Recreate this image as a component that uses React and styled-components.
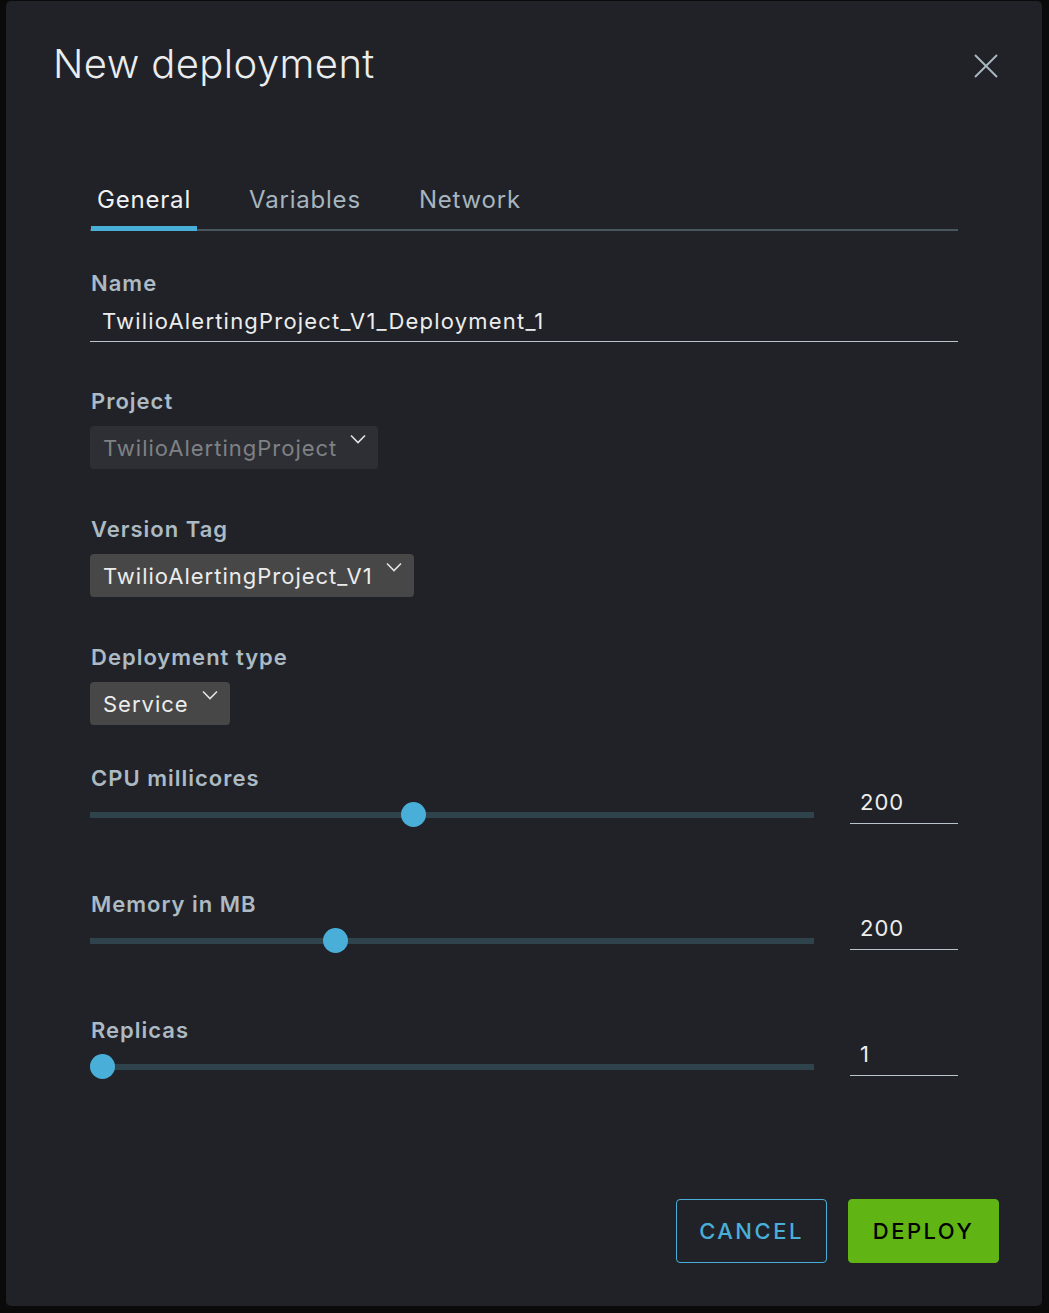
import React from 'react';
import styled, { createGlobalStyle } from 'styled-components';

const GlobalStyle = createGlobalStyle`
  html, body {
    margin: 0;
    padding: 0;
    background: #0a0a0a;
  }
  body {
    font-family: Inter, 'Noto Sans', sans-serif;
  }
`;

const Modal = styled.div`
  box-sizing: border-box;
  width: 1036px;
  height: 1305px;
  margin: 1px 0 0 6px;
  background: #212228;
  border-radius: 5px;
  display: flex;
  flex-direction: column;
`;

const Header = styled.div`
  display: flex;
  justify-content: space-between;
  align-items: flex-start;
  padding: 39px 44px 0 47px;
`;

const Title = styled.h1`
  margin: 0;
  font-size: 40px;
  line-height: 48px;
  font-weight: 300;
  letter-spacing: 0.4px;
  color: #eaecee;
`;

const CloseButton = styled.button`
  border: none;
  background: none;
  padding: 0;
  margin-top: 14px;
  width: 24px;
  height: 24px;
  cursor: pointer;
  display: flex;
`;

const Body = styled.div`
  padding: 0 84px;
  display: flex;
  flex-direction: column;
`;

const TabList = styled.div`
  margin-top: 97px;
  display: flex;
  gap: 46px;
  border-bottom: 2px solid #485660;
  padding-left: 1px;
`;

const Tab = styled.div`
  padding: 0 6px 11px;
  margin-bottom: -2px;
  font-size: 24px;
  line-height: 30px;
  letter-spacing: 0.8px;
  color: ${p => (p.$active ? '#f0f2f3' : '#a6b5be')};
  border-bottom: 5px solid ${p => (p.$active ? '#49afd9' : 'transparent')};
`;

const Field = styled.div`
  margin-top: ${p => p.$top}px;
  display: flex;
  flex-direction: column;
  align-items: flex-start;
`;

const Label = styled.label`
  font-size: 22px;
  line-height: 26px;
  font-weight: 600;
  letter-spacing: 1px;
  color: #acbac3;
  margin-bottom: 12px;
  padding-left: 1px;
`;

const TextInput = styled.div`
  align-self: stretch;
  padding: 0 12px 7px;
  font-size: 22px;
  line-height: 26px;
  letter-spacing: 1.2px;
  color: #eceded;
  border-bottom: 1px solid #b9c5cc;
`;

const Select = styled.div`
  box-sizing: border-box;
  height: 43px;
  display: inline-flex;
  gap: 13px;
  padding: 2px 12px 0 13px;
  border-radius: 4px;
  background: ${p => (p.$disabled ? '#2e2f35' : '#474747')};
  color: ${p => (p.$disabled ? '#7f8184' : '#ececec')};
  font-size: 22px;
  line-height: 40px;
  letter-spacing: 1px;

  svg {
    margin-top: 6px;
    flex-shrink: 0;
  }
`;

const SliderRow = styled.div`
  margin-top: ${p => p.$top}px;
  display: flex;
  align-items: flex-end;
  gap: 36px;
`;

const SliderColumn = styled.div`
  flex: 1;
  display: flex;
  flex-direction: column;
  align-items: flex-start;

  label {
    margin-bottom: 11px;
  }
`;

const SliderTrack = styled.div`
  position: relative;
  align-self: stretch;
  height: 26px;

  &::before {
    content: '';
    position: absolute;
    left: 0;
    right: 0;
    top: 10px;
    height: 6px;
    background: #2f434c;
  }
`;

const Thumb = styled.div`
  position: absolute;
  top: 0;
  width: 25px;
  height: 25px;
  border-radius: 50%;
  background: #49afd9;
`;

const NumberInput = styled.div`
  width: 108px;
  box-sizing: border-box;
  margin-bottom: 4px;
  padding: 0 10px 8px;
  font-size: 22px;
  line-height: 26px;
  letter-spacing: 1px;
  color: #eceded;
  border-bottom: 1px solid #b9c5cc;
`;

const Footer = styled.div`
  margin-top: auto;
  display: flex;
  justify-content: flex-end;
  gap: 21px;
  padding: 0 43px 43px 0;
`;

const Button = styled.button`
  box-sizing: border-box;
  width: 151px;
  height: 64px;
  border-radius: 4px;
  font-family: Inter, 'Noto Sans', sans-serif;
  font-size: 22px;
  font-weight: 500;
  letter-spacing: 2.5px;
  cursor: pointer;
  border: 1px solid ${p => (p.$primary ? '#60b515' : '#49afd9')};
  background: ${p => (p.$primary ? '#60b515' : 'transparent')};
  color: ${p => (p.$primary ? '#000000' : '#49afd9')};
`;

const Chevron = ({ color = '#e4e4e4' }) => (
  <svg width="16" height="10" viewBox="0 0 16 10" fill="none">
    <polyline points="1,1.5 8,8.5 15,1.5" stroke={color} strokeWidth="1.6" />
  </svg>
);

const CloseIcon = () => (
  <svg width="24" height="24" viewBox="0 0 24 24" fill="none">
    <line x1="1" y1="1" x2="23" y2="23" stroke="#a9b7be" strokeWidth="2" />
    <line x1="23" y1="1" x2="1" y2="23" stroke="#a9b7be" strokeWidth="2" />
  </svg>
);

const Slider = ({ label, value, min, max, top }) => {
  const ratio = (value - min) / (max - min);
  return (
    <SliderRow $top={top}>
      <SliderColumn>
        <Label>{label}</Label>
        <SliderTrack>
          <Thumb style={{ left: `calc((100% - 25px) * ${ratio})` }} />
        </SliderTrack>
      </SliderColumn>
      <NumberInput>{value}</NumberInput>
    </SliderRow>
  );
};

const App = () => {
  return (
    <>
      <GlobalStyle />
      <Modal>
        <Header>
          <Title>New deployment</Title>
          <CloseButton aria-label="Close">
            <CloseIcon />
          </CloseButton>
        </Header>
        <Body>
          <TabList>
            <Tab $active>General</Tab>
            <Tab>Variables</Tab>
            <Tab>Network</Tab>
          </TabList>

          <Field $top={39}>
            <Label>Name</Label>
            <TextInput>TwilioAlertingProject_V1_Deployment_1</TextInput>
          </Field>

          <Field $top={46}>
            <Label>Project</Label>
            <Select $disabled>
              <span>TwilioAlertingProject</span>
              <Chevron />
            </Select>
          </Field>

          <Field $top={47}>
            <Label>Version Tag</Label>
            <Select>
              <span>TwilioAlertingProject_V1</span>
              <Chevron />
            </Select>
          </Field>

          <Field $top={47}>
            <Label>Deployment type</Label>
            <Select>
              <span>Service</span>
              <Chevron />
            </Select>
          </Field>

          <Slider label="CPU millicores" value={200} min={0} max={450} top={40} />
          <Slider label="Memory in MB" value={200} min={0} max={600} top={63} />
          <Slider label="Replicas" value={1} min={1} max={10} top={63} />
        </Body>
        <Footer>
          <Button>CANCEL</Button>
          <Button $primary>DEPLOY</Button>
        </Footer>
      </Modal>
    </>
  );
};

export default App;
